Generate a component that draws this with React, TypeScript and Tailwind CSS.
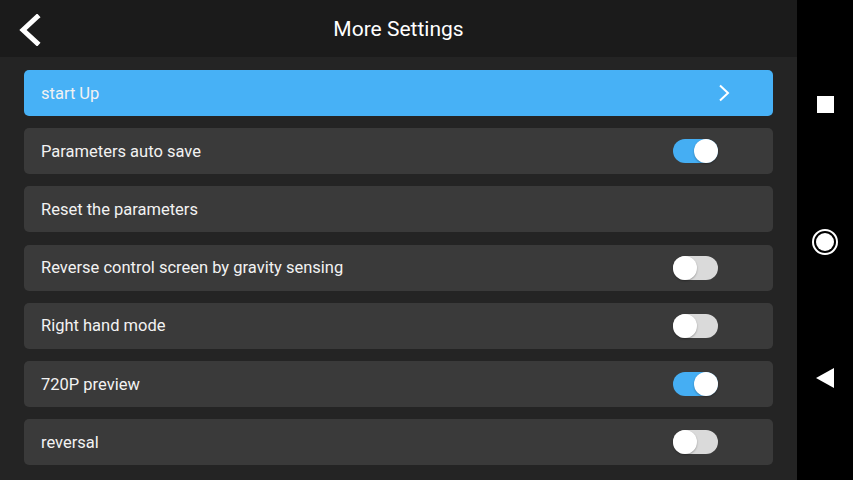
import { useState } from 'react';

type Row = { label: string; kind: 'link' | 'toggle' | 'plain'; on?: boolean; active?: boolean };

const rows: Row[] = [
  { label: 'start Up', kind: 'link', active: true },
  { label: 'Parameters auto save', kind: 'toggle', on: true },
  { label: 'Reset the parameters', kind: 'plain' },
  { label: 'Reverse control screen by gravity sensing', kind: 'toggle', on: false },
  { label: 'Right hand mode', kind: 'toggle', on: false },
  { label: '720P preview', kind: 'toggle', on: true },
  { label: 'reversal', kind: 'toggle', on: false },
];

function Toggle({ on, onClick }: { on: boolean; onClick: () => void }) {
  return (
    <button
      type="button"
      onClick={onClick}
      className={[
        'relative h-[24px] w-[45px] rounded-full',
        on ? 'bg-[#45aef3]' : 'bg-[#dadada]',
      ].join(' ')}
    >
      <span
        className={[
          'absolute top-0 h-[24px] w-[24px] rounded-full bg-white shadow-[0_1px_2px_rgba(0,0,0,0.3)]',
          on ? 'right-0' : 'left-0',
        ].join(' ')}
      />
    </button>
  );
}

export default function App() {
  const [state, setState] = useState<boolean[]>(rows.map((r) => !!r.on));

  return (
    <div className="flex h-[480px] w-[853px] font-['Roboto',sans-serif]">
      <div className="flex w-[797px] flex-col bg-[#242424]">
        <header className="relative flex h-[57px] items-center justify-center bg-[#1b1b1b]">
          <svg
            className="absolute left-[17px] top-[14px]"
            width="24"
            height="32"
            viewBox="0 0 24 32"
          >
            <path d="M20 3 L6 16 L20 29" fill="none" stroke="white" strokeWidth="5" strokeLinecap="square" />
          </svg>
          <h1 className="pt-[2px] text-[21px] text-white">More Settings</h1>
        </header>

        <div className="flex flex-col gap-[12.2px] px-[24px] pt-[13px]">
          {rows.map((r, i) => (
            <div
              key={r.label}
              className={[
                'flex h-[46px] items-center justify-between rounded-[5px] pl-[17px] pr-[55px]',
                r.active ? 'bg-[#47b1f6]' : 'bg-[#3a3a3a]',
              ].join(' ')}
            >
              <span className="pt-[2px] text-[16.5px] text-[#f2f2f2]">{r.label}</span>
              {r.kind === 'link' && (
                <svg width="12" height="18" viewBox="0 0 12 18" className="mr-[-12px]">
                  <path d="M2 1.5 L10 9 L2 16.5" fill="none" stroke="white" strokeWidth="2" />
                </svg>
              )}
              {r.kind === 'toggle' && (
                <Toggle
                  on={state[i]}
                  onClick={() => setState((s) => s.map((v, j) => (j === i ? !v : v)))}
                />
              )}
            </div>
          ))}
        </div>
      </div>

      <nav className="flex flex-1 flex-col items-center bg-black pt-[96px]">
        <div className="h-[17px] w-[17px] bg-white" />
        <div className="mt-[116px] h-[26px] w-[26px] rounded-full border-2 border-white p-[2px]">
          <div className="h-full w-full rounded-full bg-white" />
        </div>
        <svg className="mt-[113px]" width="18" height="20" viewBox="0 0 18 20">
          <path d="M0 10 L18 0 L18 20 Z" fill="white" />
        </svg>
      </nav>
    </div>
  );
}
